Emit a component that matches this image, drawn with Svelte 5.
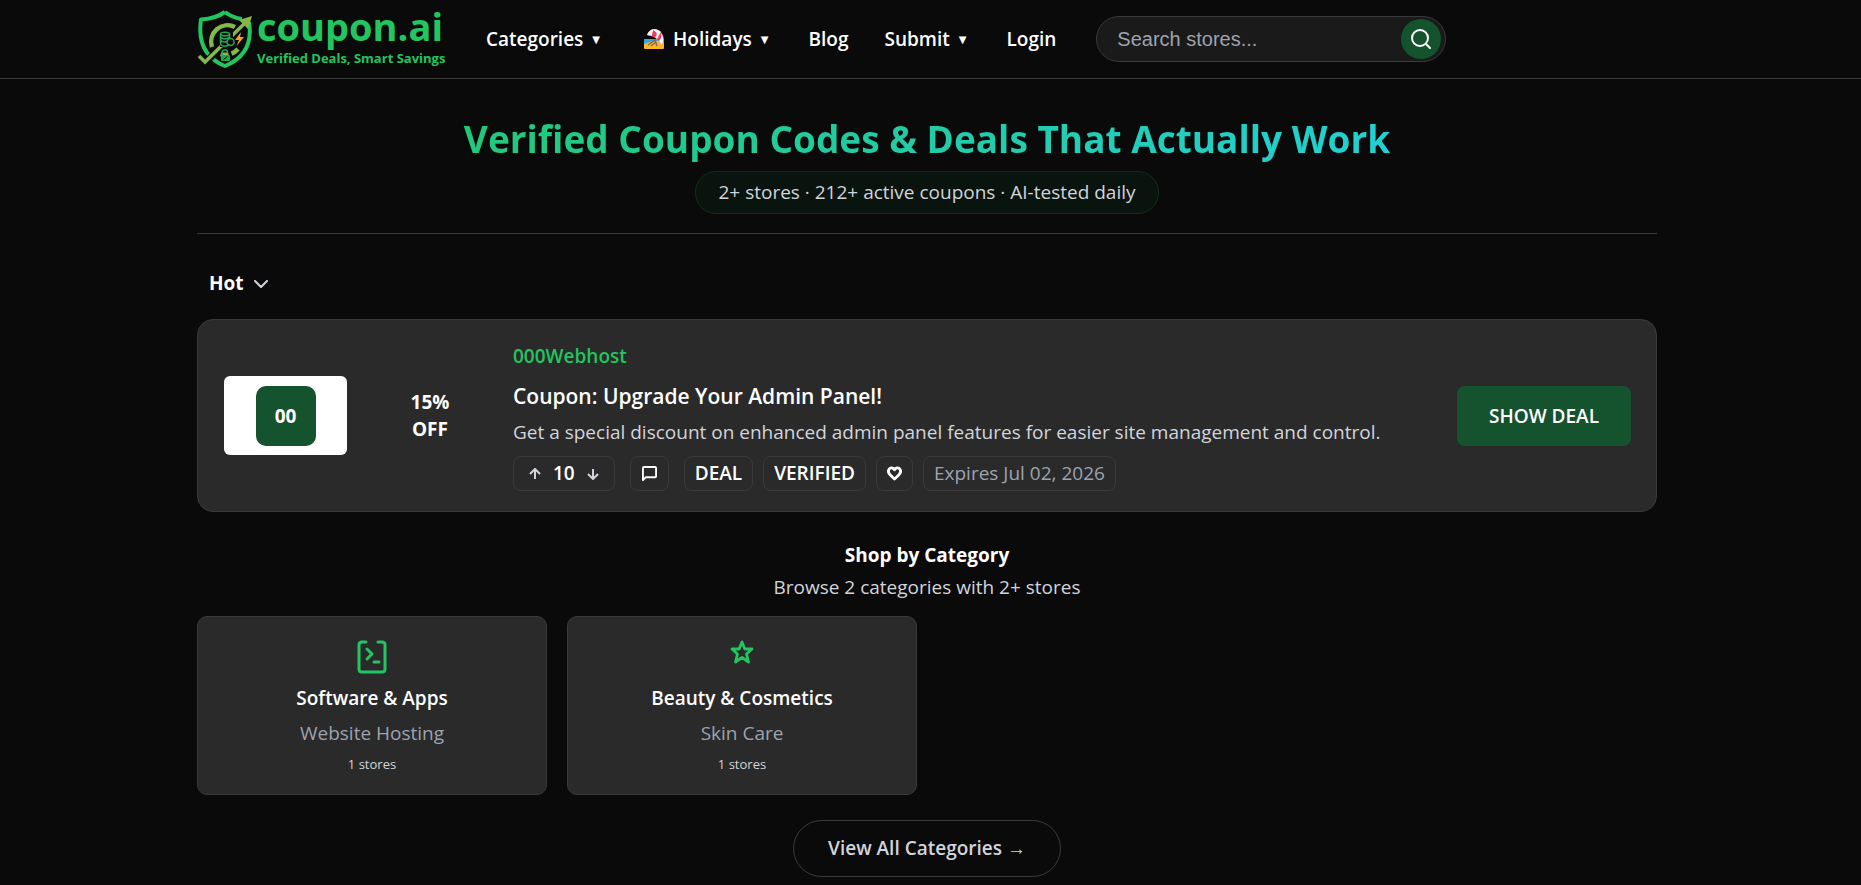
<script>
  let search = $state('');
  let votes = $state(10);

  const navItems = [
    { label: 'Categories', menu: true },
    { label: 'Holidays', menu: true, beach: true },
    { label: 'Blog', menu: false },
    { label: 'Submit', menu: true },
    { label: 'Login', menu: false }
  ];

  const categories = [
    { name: 'Software & Apps', sub: 'Website Hosting', stores: 1, icon: 'terminal' },
    { name: 'Beauty & Cosmetics', sub: 'Skin Care', stores: 1, icon: 'star' }
  ];
</script>

<div class="page">
  <header>
    <div class="container header-inner">
      <a class="logo" href="#home">
        <svg class="shield" viewBox="0 0 56 60" fill="none">
          <path d="M28 3C21 8 13 10 4 10.500C1 31 6 48 28 57C50 48 55 31 52 13" stroke="#22c55e" stroke-width="4" stroke-linejoin="round" />
          <path d="M28 3C33 7 38 9 45 10" stroke="#22c55e" stroke-width="4" />
          <path d="M15 38A16.500 16.500 0 0 1 38 18" stroke="#84b84a" stroke-width="4.500" />
          <path d="M41 40A16.500 16.500 0 0 1 21 44" stroke="#84b84a" stroke-width="4.500" stroke-dasharray="8 3" />
          <path d="M2 48L8 54L48 14" stroke="#0a0a0a" stroke-width="7" />
          <path d="M2 47L8 53L48 14" stroke="#84b84a" stroke-width="3.500" />
          <path d="M55 7L42 11L51 20Z" fill="#84b84a" />
          <rect x="23" y="23" width="13" height="15" fill="#0a0a0a" />
          <g stroke="#22a852" stroke-width="1.500">
            <ellipse cx="28" cy="25" rx="4.500" ry="1.800" />
            <path d="M23.500 25V35C25 38 31 38 32 35M23.500 28C25 30.500 31 30.500 32.500 28M23.500 31C25 33.500 29 33.500 30 32M32.500 25V29" />
            <circle cx="33.500" cy="33" r="3.500" />
            <path d="M25 46V44C25 40 30 40 30.500 43" />
          </g>
          <rect x="24" y="46" width="9" height="6" rx="1" fill="#22a852" />
          <path d="M26.500 50.500L30.500 47.500" stroke="#0a0a0a" stroke-width="1" />
          <path d="M44 23L38 31H42L39.500 37L47 28H43Z" fill="#f59e2b" />
        </svg>
        <span class="logo-text">
          <span class="brand">coupon.ai</span>
          <span class="tagline">Verified Deals, Smart Savings</span>
        </span>
      </a>

      <nav>
        {#each navItems as item}
          <a class:has-menu={item.menu} class:has-icon={item.beach} href="#{item.label.toLowerCase()}">
            {#if item.beach}
              <svg class="beach" viewBox="0 0 20 22">
                <rect y="11" width="20" height="6" fill="#35a7dc" />
                <path d="M0 16C6 13 14 12 20 13V20Q20 21 19 21H1Q0 21 0 20Z" fill="#fbb72c" />
                <path d="M4 17L11 12L13 18M7 18L12 14" stroke="#8a6a4a" stroke-width="1.500" fill="none" />
                <path d="M3 7C5 1 11-1 16 3C20 7 21 12 18 17C15 11 9 8 3 7Z" fill="#ef3d58" />
                <path d="M3 7C4 4 7 1 10 1C9 3 8 5 8 8Z" fill="#f1f3f5" />
                <path d="M10 1C13 1 16 3 17 4L13 11L11 9C14 7 13 4 9 2Z" fill="#f1f3f5" />
                <path d="M17 5C20 8 20 13 18 17L15 13C17 11 18 8 17 5Z" fill="#f1f3f5" />
              </svg>
            {/if}
            {item.label}
            {#if item.menu}<span class="caret">▼</span>{/if}
          </a>
        {/each}
      </nav>

      <form class="search" onsubmit={(e) => e.preventDefault()}>
        <input type="text" placeholder="Search stores..." aria-label="Search stores" bind:value={search} />
        <button type="submit" aria-label="Search">
          <svg viewBox="0 0 20 20" fill="none" stroke="#fff" stroke-width="2" stroke-linecap="round">
            <circle cx="9" cy="9" r="8" />
            <path d="M15 15L19 19" />
          </svg>
        </button>
      </form>
    </div>
  </header>

  <main class="container">
    <section class="hero">
      <h1>Verified Coupon Codes &amp; Deals That Actually Work</h1>
      <p class="stats">2+ stores · 212+ active coupons · AI-tested daily</p>
    </section>

    <button class="sort">
      Hot
      <svg viewBox="0 0 14 8" fill="none" stroke="#d1d5db" stroke-width="2" stroke-linecap="round" stroke-linejoin="round">
        <path d="M1 1L7 7L13 1" />
      </svg>
    </button>

    <article class="deal">
      <div class="store-logo"><span>00</span></div>
      <div class="saving">15%<br />OFF</div>
      <div class="info">
        <a class="store" href="#store">000Webhost</a>
        <h2>Coupon: Upgrade Your Admin Panel!</h2>
        <p>Get a special discount on enhanced admin panel features for easier site management and control.</p>
        <div class="meta">
          <div class="chip votes">
            <button aria-label="Vote up" onclick={() => votes++}>
              <svg viewBox="0 0 12 12"><path d="M6 11V1M1 6L6 1L11 6" /></svg>
            </button>
            <span>{votes}</span>
            <button aria-label="Vote down" onclick={() => votes--}>
              <svg viewBox="0 0 12 12"><path d="M6 1V11M1 6L6 11L11 6" /></svg>
            </button>
          </div>
          <button class="chip comment" aria-label="Comments">
            <svg viewBox="0 0 16 16" fill="none" stroke="#fff" stroke-width="2" stroke-linejoin="round">
              <path d="M1 15V2Q1 1 2 1H14Q15 1 15 2V11Q15 12 14 12H4Z" />
            </svg>
          </button>
          <span class="chip">DEAL</span>
          <span class="chip">VERIFIED</span>
          <button class="chip" aria-label="Save deal">
            <svg viewBox="0 0 16 16" fill="none" stroke="#fff" stroke-width="3" stroke-linejoin="round">
              <path d="M8 14L3 9C-1 4 5-1 8 4C11-1 17 4 13 9Z" />
            </svg>
          </button>
          <span class="chip expires">Expires Jul 02, 2026</span>
        </div>
      </div>
      <button class="show-deal">SHOW DEAL</button>
    </article>

    <section class="shop">
      <h3>Shop by Category</h3>
      <p>Browse 2 categories with 2+ stores</p>
      <div class="grid">
        {#each categories as category}
          <a class="category" href="#category">
            <span class="icon">
              {#if category.icon === 'terminal'}
                <svg width="30" height="34" viewBox="0 0 30 34" stroke-width="3">
                  <path d="M9 2H5Q2 2 2 5V29Q2 32 5 32H25Q28 32 28 29V5Q28 2 25 2H21M10 9L15 14L10 19M17 22H22" />
                </svg>
              {:else}
                <svg width="24" height="24" viewBox="0 0 24 24" stroke-width="2.8">
                  <path d="M12 2L14.800 9H22L16.500 14L18.500 22L12 17.500L5.500 22L7.500 14L2 9H9.200Z" />
                </svg>
              {/if}
            </span>
            <strong>{category.name}</strong>
            <span class="sub">{category.sub}</span>
            <small>{category.stores} stores</small>
          </a>
        {/each}
      </div>
      <a class="view-all" href="#categories">View All Categories →</a>
    </section>
  </main>
</div>

<style>
  :global(body) {
    background: #0a0a0a;
  }

  .page {
    font-family: 'Open Sans', 'Noto Sans', sans-serif;
    font-size: 19px;
    line-height: 27px;
    color: #fff;
    padding-right: 7px;
  }

  a {
    color: inherit;
    text-decoration: none;
  }

  button {
    font: inherit;
    color: inherit;
    background: none;
    border: none;
    padding: 0;
    cursor: pointer;
  }

  h1,
  h2,
  h3,
  p {
    margin: 0;
  }

  svg {
    display: block;
    flex: none;
  }

  .container {
    max-width: 1460px;
    margin: 0 auto;
  }

  header {
    border-bottom: 1px solid #3a3a3a;
    margin-right: -7px;
    padding-right: 7px;
  }

  .header-inner {
    display: flex;
    align-items: center;
    height: 78px;
  }

  .logo {
    display: flex;
    align-items: center;
    gap: 4px;
    width: 250px;
    margin-right: 39px;
    color: #22c55e;
  }

  .shield {
    width: 56px;
    height: 60px;
  }

  .logo-text {
    display: flex;
    flex-direction: column;
    white-space: nowrap;
  }

  .brand {
    font-size: 38px;
    font-weight: 700;
    line-height: 38px;
  }

  .tagline {
    font-size: 13px;
    font-weight: 700;
    line-height: 26px;
  }

  nav {
    display: flex;
    align-items: center;
    gap: 36px;
    font-weight: 600;
  }

  nav a {
    display: flex;
    align-items: center;
    gap: 9px;
  }

  .has-menu {
    padding-right: 4px;
  }

  .has-icon {
    padding-left: 4px;
  }

  .caret {
    font-family: 'DejaVu Sans', sans-serif;
    font-size: 10px;
  }

  .beach {
    width: 20px;
    height: 22px;
  }

  .search {
    display: flex;
    align-items: center;
    box-sizing: border-box;
    width: 350px;
    height: 46px;
    margin-left: 40px;
    padding: 0 4px 0 20px;
    background: #1a1a1a;
    border: 1px solid #3a3a3a;
    border-radius: 23px;
  }

  .search input {
    flex: 1;
    min-width: 0;
    padding: 0;
    color: #fff;
    background: none;
    border: none;
    outline: none;
    font-family: 'Liberation Sans', Arial, sans-serif;
    font-size: 20px;
  }

  .search input::placeholder {
    color: #9ca3af;
  }

  .search button {
    display: flex;
    align-items: center;
    justify-content: center;
    width: 40px;
    height: 40px;
    border-radius: 50%;
    background: #14532d;
  }

  .search svg {
    width: 20px;
    height: 20px;
  }

  .hero {
    display: flex;
    flex-direction: column;
    align-items: center;
    padding: 32px 0 19px;
    border-bottom: 1px solid #3a3a3a;
    text-align: center;
  }

  h1 {
    width: 100%;
    margin-bottom: 4px;
    font-size: 37px;
    font-weight: 700;
    line-height: 56px;
    color: transparent;
    background: linear-gradient(135deg, #22c55e, #22d3ee);
    background-clip: text;
  }

  .stats {
    padding: 7px 22px;
    color: #d1d5db;
    background: #0a140e;
    border: 1px solid #0f2e1b;
    border-radius: 21px;
  }

  .sort {
    display: flex;
    align-items: center;
    gap: 10px;
    margin: 36px 0 22px;
    padding: 0 12px;
    font-weight: 700;
  }

  .sort svg {
    width: 14px;
    height: 8px;
  }

  .deal {
    display: grid;
    grid-template-columns: 123px 102px 1fr auto;
    align-items: center;
    gap: 32px;
    padding: 20px 25px 20px 26px;
    background: #2a2a2a;
    border: 1px solid #3a3a3a;
    border-radius: 16px;
  }

  .store-logo {
    display: flex;
    align-items: center;
    justify-content: center;
    height: 79px;
    background: #fff;
    border-radius: 6px;
  }

  .store-logo span {
    width: 60px;
    border-radius: 10px;
    background: #14532d;
    font-weight: 700;
    line-height: 60px;
    text-align: center;
  }

  .saving {
    font-weight: 700;
    text-align: center;
  }

  .info {
    padding-top: 3px;
  }

  .store {
    color: #22c55e;
    font-weight: 600;
  }

  h2 {
    margin: 11px 0 8px;
    font-size: 21px;
    font-weight: 600;
    line-height: 30px;
  }

  .info p {
    color: #d1d5db;
  }

  .meta {
    display: flex;
    gap: 10px;
    margin-top: 10px;
  }

  .chip {
    display: flex;
    align-items: center;
    gap: 12px;
    box-sizing: border-box;
    height: 35px;
    padding: 0 10px;
    border: 1px solid #3a3a3a;
    border-radius: 8px;
    font-weight: 600;
  }

  .chip svg {
    width: 15px;
    height: 15px;
  }

  .votes {
    padding: 0 15px;
  }

  .votes svg {
    width: 12px;
    height: 12px;
    fill: none;
    stroke: #d1d5db;
    stroke-width: 2;
  }

  .comment {
    margin: 0 5px;
    padding: 0 11px;
  }

  .expires {
    color: #9ca3af;
    font-weight: 400;
  }

  .show-deal {
    padding: 0 32px;
    border-radius: 8px;
    background: #14532d;
    font-weight: 600;
    line-height: 60px;
  }

  .shop {
    display: flex;
    flex-direction: column;
    align-items: center;
    padding-top: 30px;
  }

  h3 {
    margin-bottom: 5px;
    font-size: 19px;
    font-weight: 700;
  }

  .shop p {
    color: #d1d5db;
  }

  .grid {
    display: grid;
    grid-template-columns: repeat(4, 1fr);
    gap: 20px;
    width: 100%;
    margin: 15px 0 25px;
  }

  .category {
    display: flex;
    flex-direction: column;
    align-items: center;
    padding: 23px 20px 20px;
    background: #2a2a2a;
    border: 1px solid #3a3a3a;
    border-radius: 10px;
  }

  .icon {
    height: 45px;
  }

  .icon svg {
    fill: none;
    stroke: #22c55e;
    stroke-linecap: round;
    stroke-linejoin: round;
  }

  .category strong {
    margin-bottom: 8px;
    font-weight: 600;
  }

  .sub {
    margin-bottom: 7px;
    color: #9ca3af;
  }

  small {
    color: #d1d5db;
    font-size: 13px;
    line-height: 20px;
  }

  .view-all {
    padding: 14px 34px;
    color: #d1d5db;
    border: 1px solid #3a3a3a;
    border-radius: 29px;
    font-weight: 600;
  }
</style>
